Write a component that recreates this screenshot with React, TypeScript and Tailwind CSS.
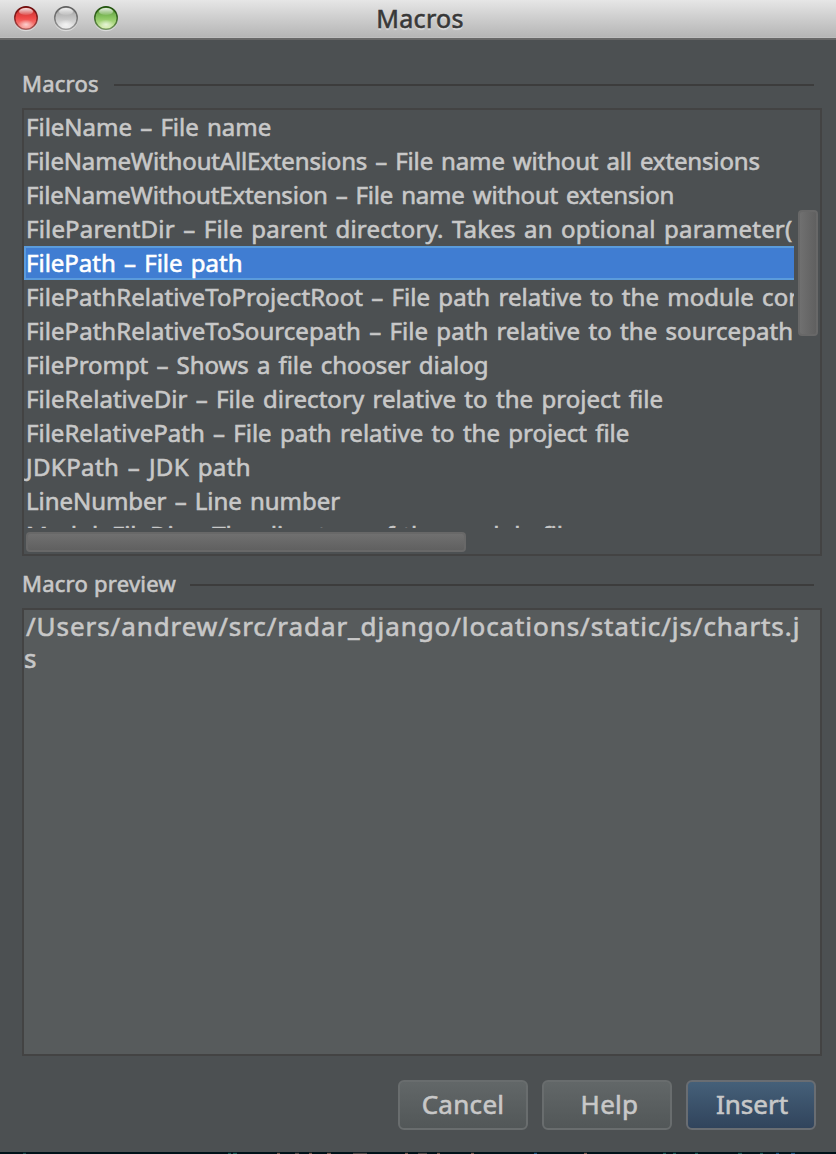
import React from "react";

type Row = { text: string; tracking: string; selected?: boolean };

const rows: Row[] = [
  { text: "FileName – File name", tracking: "tracking-[-0.01px]" },
  { text: "FileNameWithoutAllExtensions – File name without all extensions", tracking: "tracking-[-0.15px]" },
  { text: "FileNameWithoutExtension – File name without extension", tracking: "tracking-[-0.19px]" },
  { text: "FileParentDir – File parent directory. Takes an optional parameter(", tracking: "tracking-[0.18px]" },
  { text: "FilePath – File path", tracking: "tracking-[-0.01px]", selected: true },
  { text: "FilePathRelativeToProjectRoot – File path relative to the module content root", tracking: "tracking-[0.04px]" },
  { text: "FilePathRelativeToSourcepath – File path relative to the sourcepath", tracking: "tracking-[0.05px]" },
  { text: "FilePrompt – Shows a file chooser dialog", tracking: "tracking-[-0.05px]" },
  { text: "FileRelativeDir – File directory relative to the project file", tracking: "tracking-[0.05px]" },
  { text: "FileRelativePath – File path relative to the project file", tracking: "tracking-[0.01px]" },
  { text: "JDKPath – JDK path", tracking: "tracking-[0.4px]" },
  { text: "LineNumber – Line number", tracking: "tracking-[-0.04px]" },
  { text: "ModuleFileDir – The directory of the module file", tracking: "tracking-[0.01px]" },
];

function Light({ id, edge, top, mid, low }: { id: string; edge: string; top: string; mid: string; low: string }) {
  return (
    <svg width="26" height="28" viewBox="0 0 26 28">
      <defs>
        <linearGradient id={id + "b"} x1="0" y1="0" x2="0" y2="1">
          <stop offset="0" stopColor={top} />
          <stop offset="0.5" stopColor={mid} />
          <stop offset="1" stopColor={low} />
        </linearGradient>
        <linearGradient id={id + "e"} x1="0" y1="0" x2="0" y2="1">
          <stop offset="0" stopColor={edge} />
          <stop offset="1" stopColor={edge} stopOpacity="0.55" />
        </linearGradient>
        <linearGradient id={id + "g"} x1="0" y1="0" x2="0" y2="1">
          <stop offset="0" stopColor="#fff" stopOpacity="0.9" />
          <stop offset="1" stopColor="#fff" stopOpacity="0.1" />
        </linearGradient>
        <radialGradient id={id + "l"}>
          <stop offset="0" stopColor="#fff" stopOpacity="0.65" />
          <stop offset="1" stopColor="#fff" stopOpacity="0" />
        </radialGradient>
      </defs>
      <circle cx="13" cy="14.3" r="12" fill="#fff" fillOpacity="0.45" />
      <circle cx="13" cy="13" r="11.3" fill={`url(#${id}b)`} stroke={`url(#${id}e)`} strokeWidth="1.5" />
      <ellipse cx="13" cy="19.5" rx="8" ry="5" fill={`url(#${id}l)`} />
      <ellipse cx="13" cy="6.5" rx="7" ry="3.6" fill={`url(#${id}g)`} />
    </svg>
  );
}

function Heading({ children, width }: { children: string; width: string }) {
  return (
    <div className="flex h-[30px] items-center pr-2">
      <span className={`${width} -mt-[2px] shrink-0 whitespace-nowrap text-[22px] leading-[30px] tracking-[0.25px]`}>{children}</span>
      <span className="mt-[2px] h-[2px] flex-1 bg-[#3c3c3c]" />
    </div>
  );
}

const specks = [
  [23, 3, "#1b4a4b"], [228, 3, "#1d5c58"], [233, 4, "#1d5c58"], [277, 3, "#7a5c50"], [295, 4, "#554c49"],
  [309, 3, "#7a5c50"], [327, 4, "#7a5c50"], [353, 14, "#4a4442"], [405, 3, "#7a5c50"], [418, 9, "#4a4442"],
  [437, 3, "#7a5c50"], [471, 3, "#7a5c50"], [534, 3, "#1f5580"], [584, 3, "#7a5c50"], [663, 3, "#1d5c58"],
  [673, 3, "#1d5c58"], [695, 3, "#1d5c58"], [738, 4, "#1d5c58"], [760, 3, "#1d5c58"], [776, 3, "#1f5580"], [791, 4, "#1f5580"],
] as const;

export default function App() {
  return (
    <div className="flex h-[1154px] w-[836px] flex-col overflow-hidden bg-[#4c5052] font-['Noto_Sans','Open_Sans',sans-serif] font-normal text-[#c8c8c8] [-webkit-text-stroke-width:0.6px] [font-variant-ligatures:none]">
      <header className="grid h-10 shrink-0 grid-cols-[1fr_auto_1fr] border-b-2 border-[#686868] bg-linear-to-b from-[#e6e6e6] to-[#b4b4b4] shadow-[inset_0_-1px_0_#bdbdbd]">
        <div className="flex gap-[14px] pl-[13px] pt-[5px]">
          <Light id="red" edge="#6c0c0c" top="#b52a28" mid="#f04a48" low="#f99a92" />
          <Light id="gray" edge="#606060" top="#9b9b9b" mid="#c4c4c4" low="#eeeeee" />
          <Light id="green" edge="#20500c" top="#4d8c31" mid="#8cc763" low="#d8efaa" />
        </div>
        <h1 className="pl-1 text-[25px] leading-[36px] tracking-[0.35px] text-[#383838] [text-shadow:0_2px_1px_rgba(255,255,255,0.45)]">Macros</h1>
      </header>

      <main className="flex flex-col pl-[22px] pr-[14px] pt-[29px]">
        <Heading width="w-[92px]">Macros</Heading>
        <section className="mt-[9px] h-[448px] border-2 border-[#434343]">
          <div className="flex h-[418px]">
            <ul className="w-[770px] overflow-hidden">
              {rows.map((r) => (
                <li
                  key={r.text}
                  className={`${r.tracking} h-[34px] whitespace-pre pl-[2px] text-[24px] leading-[30px] [word-spacing:2px] ${
                    r.selected ? "border-y-2 border-l-2 border-[#5a9bdc] bg-[#407dd2] -indent-[2px] text-white" : "border-y-2 border-transparent"
                  }`}
                >
                  {r.text}
                </li>
              ))}
            </ul>
            <div className="ml-1 mt-[100px] h-[126px] w-5 rounded-[4px] border-2 border-[#686868] bg-linear-to-r from-[#707070] to-[#606060]" />
          </div>
          <div className="ml-[2px] mt-[4px] h-5 w-[440px] rounded-[4px] border-2 border-[#686868] bg-linear-to-b from-[#707070] to-[#606060]" />
        </section>

        <div className="mt-[13px]">
          <Heading width="w-[168px]">Macro preview</Heading>
        </div>
        <section className="mt-[9px] h-[448px] border-2 border-[#434343] bg-[#575b5c] pr-[14px] text-[26px] leading-8">
          <p className="break-all indent-[2px] tracking-[0.93px]">/Users/andrew/src/radar_django/locations/static/js/charts.js</p>
        </section>

        <footer className="mt-6 flex justify-end gap-[14px] pr-[6px] text-[26px] leading-[44px]">
          <button className="flex h-[50px] w-[130px] justify-center rounded-[6px] border-2 border-[#696d6e] bg-linear-to-b from-[#626768] to-[#525758] tracking-[0.3px]">Cancel</button>
          <button className="flex h-[50px] w-[130px] justify-center rounded-[6px] border-2 border-[#696d6e] bg-linear-to-b from-[#626768] to-[#525758] pl-[5px] tracking-[0.3px]">Help</button>
          <button className="flex h-[50px] w-[130px] justify-center rounded-[6px] border-2 border-[#696d72] bg-linear-to-b from-[#456079] to-[#31445c] pl-[2px]">Insert</button>
        </footer>
      </main>

      <svg className="mt-auto shrink-0" width="836" height="2">
        <rect width="836" height="2" fill="#001219" />
        {specks.map(([x, w, c]) => (
          <rect key={x} x={x} y="0.8" width={w} height="1.2" fill={c} />
        ))}
      </svg>
    </div>
  );
}
